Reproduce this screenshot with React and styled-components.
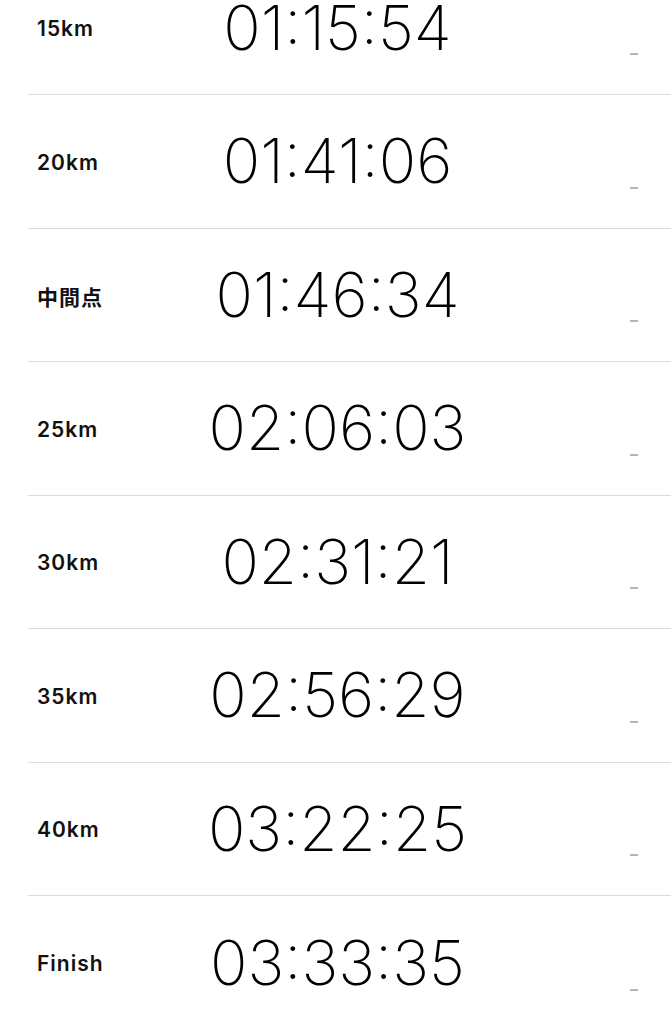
import styled, { createGlobalStyle } from "styled-components"

const GlobalStyle = createGlobalStyle`
    html, body {
        margin: 0;
        padding: 0;
        background: #FFF;
    }
    body {
        font-family: Inter, "Noto Sans", "Noto Sans CJK JP", sans-serif;
        overflow: hidden;
    }
`

const splits = [
    { label: "15km", time: "01:15:54" },
    { label: "20km", time: "01:41:06" },
    { label: "中間点", time: "01:46:34" },
    { label: "25km", time: "02:06:03" },
    { label: "30km", time: "02:31:21" },
    { label: "35km", time: "02:56:29" },
    { label: "40km", time: "03:22:25" },
    { label: "Finish", time: "03:33:35" },
]

const App = () => {
    return (
        <>
            <GlobalStyle />
            <SplitList>
                {splits.map((item) => (
                    <SplitRow key={item.label} last={item.label === "Finish"}>
                        <Label>{item.label}</Label>
                        <Time>{item.time}</Time>
                        <Dash />
                    </SplitRow>
                ))}
            </SplitList>
        </>
    )
}

export default App

const SplitList = styled.div`
    margin-top: -38.5px;
    width: 671px;
`

const SplitRow = styled.div`
    display: grid;
    grid-template-columns: 1fr auto 1fr;
    align-items: center;

    height: 133.5px;
    box-sizing: border-box;
    margin-left: 28px;
    padding: 0 33px 0 9px;

    border-bottom: ${(p) => (p.last ? "none" : "1px solid #DCDCDC")};
`

const Label = styled.div`
    justify-self: start;
    margin-top: 2px;

    color: #111;
    font-family: Inter, "Noto Sans CJK JP", sans-serif;
    font-size: 21px;
    font-weight: 600;
    letter-spacing: 1px;
`

const Time = styled.div`
    color: #000;
    font-family: Inter, sans-serif;
    font-size: 62px;
    font-weight: 200;
    letter-spacing: 0;
    line-height: 50px;
`

const Dash = styled.div`
    justify-self: end;
    align-self: end;

    width: 8px;
    height: 2px;
    margin: 0 0 39px 0;

    background: #B5B5B5;
`
